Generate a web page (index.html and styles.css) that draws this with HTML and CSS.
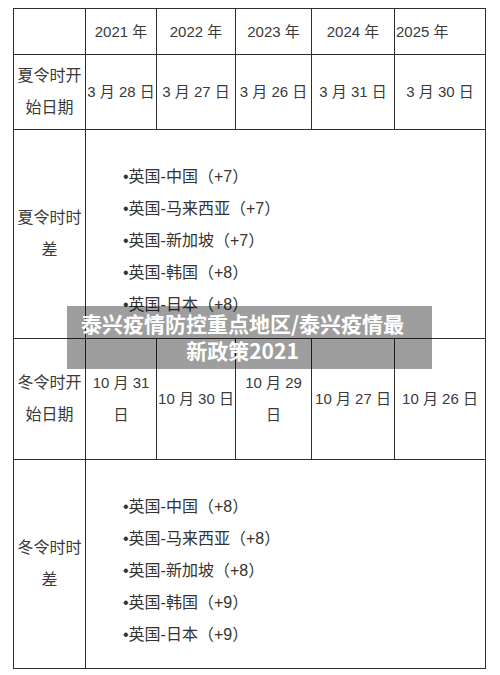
FILE: index.html
```html
<!DOCTYPE html>
<html lang="zh-CN">
<head>
<meta charset="utf-8">
<title>泰兴疫情防控重点地区/泰兴疫情最新政策2021</title>
<link rel="stylesheet" href="styles.css">
</head>
<body>
<div class="sheet">
  <div class="cell"></div>
  <div class="cell">2021 年</div>
  <div class="cell">2022 年</div>
  <div class="cell">2023 年</div>
  <div class="cell">2024 年</div>
  <div class="cell left">2025 年</div>

  <div class="cell head">夏令时开<br>始日期</div>
  <div class="cell">3 月 28 日</div>
  <div class="cell">3 月 27 日</div>
  <div class="cell">3 月 26 日</div>
  <div class="cell">3 月 31 日</div>
  <div class="cell">3 月 30 日</div>

  <div class="cell head">夏令时时<br>差</div>
  <div class="cell span5">
    <ul class="list">
      <li>•英国-中国（+7）</li>
      <li>•英国-马来西亚（+7）</li>
      <li>•英国-新加坡（+7）</li>
      <li>•英国-韩国（+8）</li>
      <li>•英国-日本（+8）</li>
    </ul>
  </div>

  <div class="cell head">冬令时开<br>始日期</div>
  <div class="cell">10 月 31<br>日</div>
  <div class="cell">10 月 30 日</div>
  <div class="cell">10 月 29<br>日</div>
  <div class="cell">10 月 27 日</div>
  <div class="cell">10 月 26 日</div>

  <div class="cell head">冬令时时<br>差</div>
  <div class="cell span5">
    <ul class="list">
      <li>•英国-中国（+8）</li>
      <li>•英国-马来西亚（+8）</li>
      <li>•英国-新加坡（+8）</li>
      <li>•英国-韩国（+9）</li>
      <li>•英国-日本（+9）</li>
    </ul>
  </div>
</div>
<div class="caption">泰兴疫情防控重点地区/泰兴疫情最新政策2021</div>
</body>
</html>
```
FILE: styles.css
```css
html, body {
  margin: 0;
  padding: 0;
  background: #fff;
}

body {
  position: relative;
  width: 500px;
  height: 675px;
  overflow: hidden;
  font-family: "Liberation Sans", "Noto Sans CJK SC", sans-serif;
  color: #3a3a3a;
}

.sheet {
  display: grid;
  grid-template-columns: 71px 70px 78px 75px 82px 90px;
  grid-template-rows: 45px 74px 208px 120px 208px;
  gap: 1px;
  padding: 1px;
  background: #2e2e2e;
  width: max-content;
  margin: 8px 0 0 13px;
}

.cell {
  background: #fff;
  display: flex;
  align-items: center;
  justify-content: center;
  text-align: center;
  font-size: 15px;
  line-height: 32px;
  white-space: nowrap;
}

.cell.left {
  justify-content: flex-start;
  padding-left: 1px;
}

.cell.head {
  font-size: 16px;
}

.cell.span5 {
  grid-column: 2 / 7;
  align-items: flex-start;
  justify-content: flex-start;
  text-align: left;
}

.list {
  list-style: none;
  margin: 0;
  padding: 31px 0 0 37px;
  font-size: 16px;
  line-height: 32px;
  color: #333;
}

.caption {
  position: absolute;
  left: 67px;
  top: 306px;
  width: 365px;
  height: 63px;
  box-sizing: border-box;
  padding: 4px 22px 4px 8px;
  background: rgba(0, 0, 0, 0.38);
  color: #fff;
  font-family: "Noto Sans CJK SC", sans-serif;
  font-weight: 700;
  font-size: 21px;
  line-height: 27px;
  text-align: center;
}
```
